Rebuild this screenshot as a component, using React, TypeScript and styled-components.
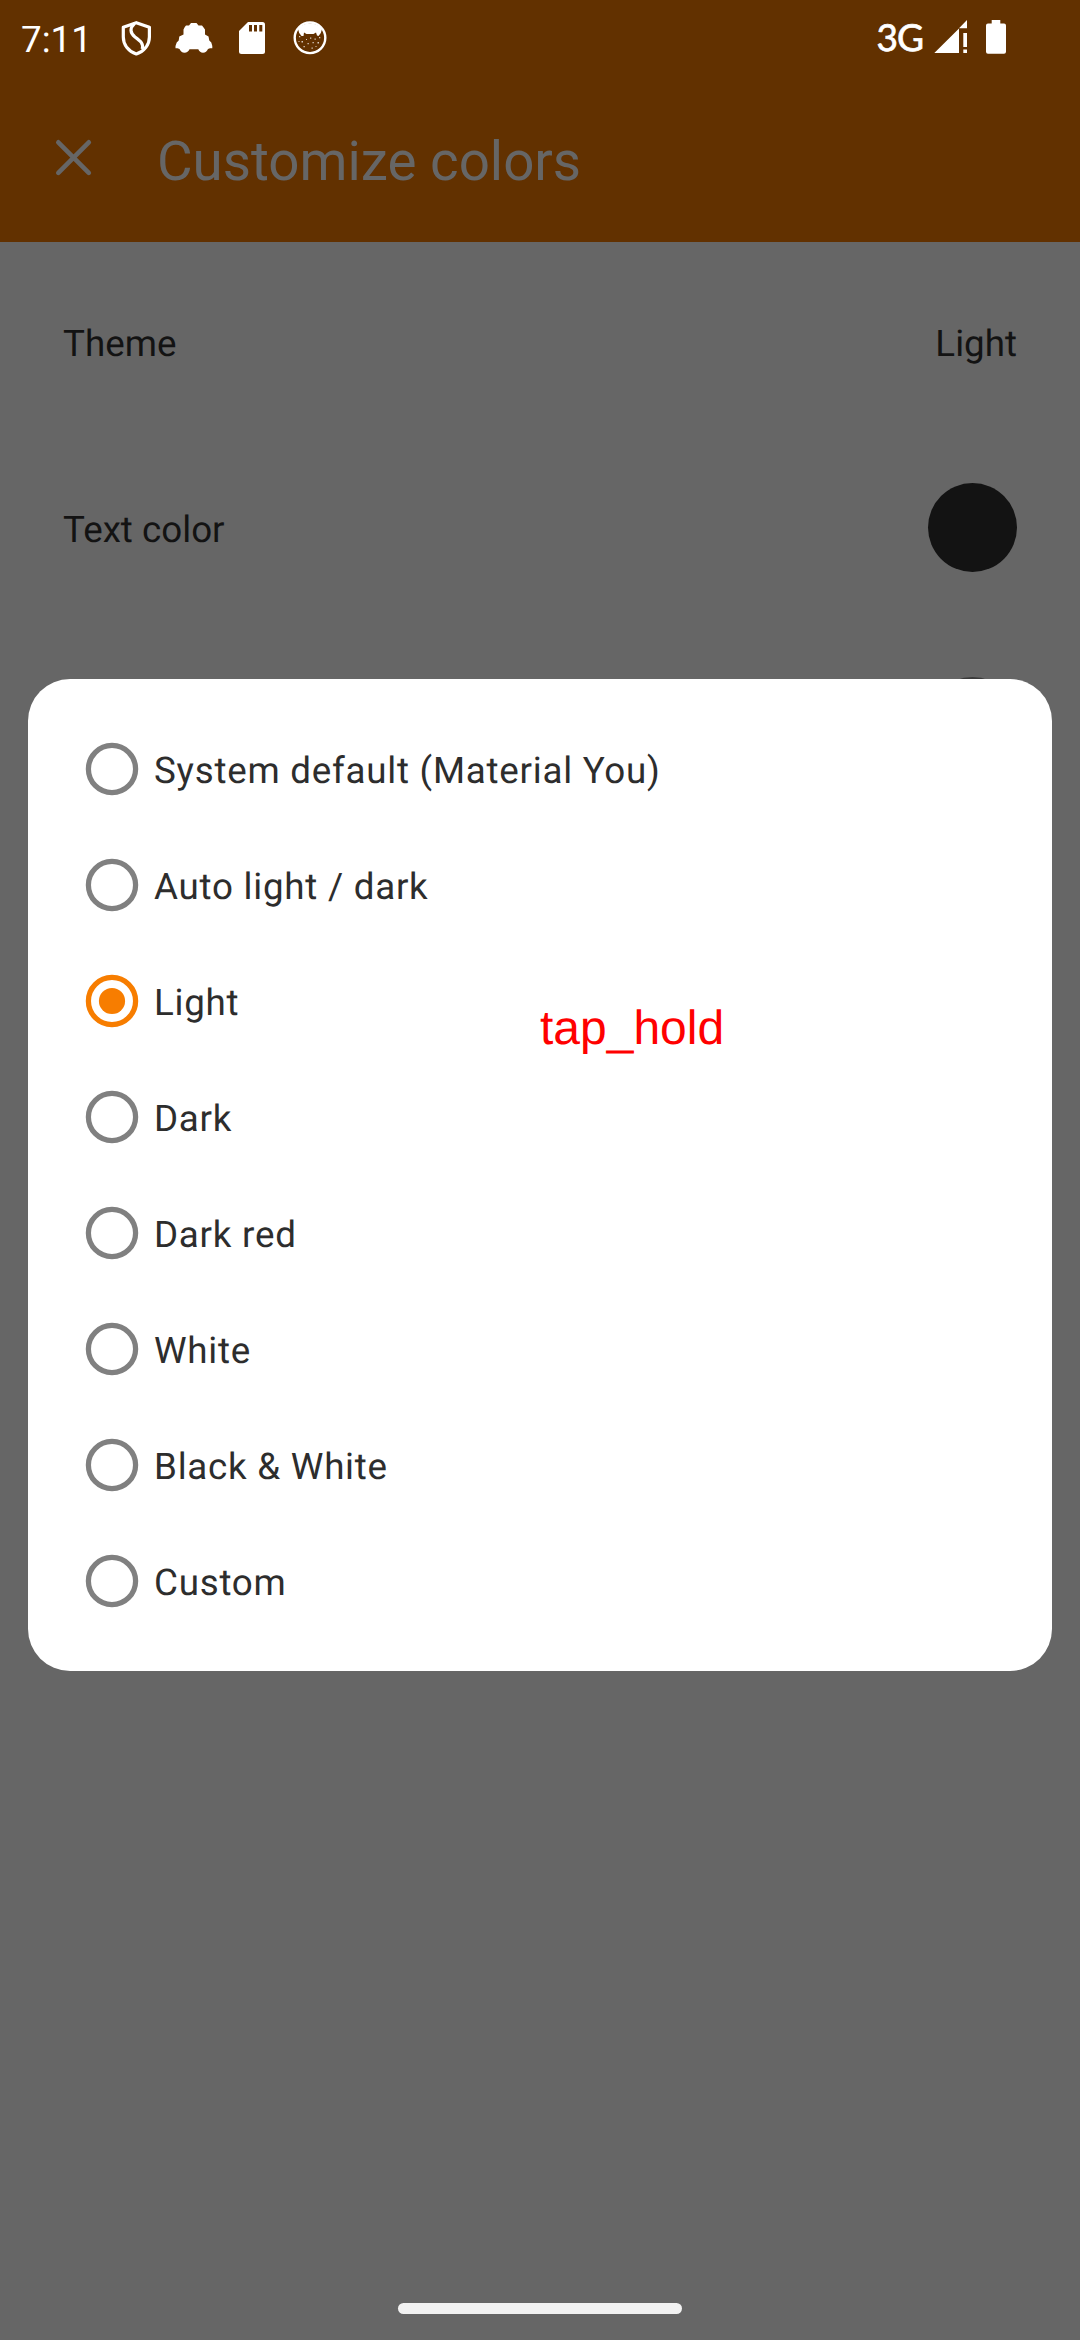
import React from "react";
import styled, { createGlobalStyle } from "styled-components";

const GlobalStyle = createGlobalStyle`
  * { box-sizing: border-box; }
  body {
    margin: 0;
    background: #666666;
    font-family: Roboto, sans-serif;
    text-rendering: geometricPrecision;
  }
`;

const Screen = styled.div`
  position: relative;
  display: flex;
  flex-direction: column;
  width: 1080px;
  height: 2340px;
  overflow: hidden;
  background: #666666;
`;

const Header = styled.header`
  height: 242px;
  background: #623100;
`;

const StatusBar = styled.div`
  display: flex;
  justify-content: space-between;
  height: 76px;
  padding: 0 73px 0 21px;
  color: #ffffff;
`;

const StatusGroup = styled.div`
  display: flex;
  align-items: center;
`;

const Clock = styled.span`
  width: 99px;
  font-size: 36.75px;
  line-height: 44px;
  padding-top: 4px;
`;

const Network = styled.span`
  font-family: Lato, sans-serif;
  font-size: 37px;
  line-height: 44px;
  letter-spacing: -1px;
  padding-bottom: 2px;
  -webkit-text-stroke: 0.7px #ffffff;
`;

const StatusIcon = styled.svg<{ $gap?: number }>`
  display: block;
  flex: none;
  margin-left: ${(p) => p.$gap ?? 0}px;
`;

const TitleBar = styled.div`
  display: flex;
  align-items: center;
  height: 166px;
  padding: 0 52px;
`;

const CloseButton = styled.button`
  display: flex;
  width: 105px;
  height: 44px;
  padding: 0;
  margin-top: -3px;
  border: 0;
  background: none;
`;

const Title = styled.h1`
  margin: 5px 0 0;
  font-size: 54.7px;
  line-height: 64px;
  font-weight: 400;
  color: #666666;
`;

const Settings = styled.main`
  display: flex;
  flex-direction: column;
  padding: 8px 63px 0;
`;

const Setting = styled.div<{ $height: number }>`
  display: flex;
  align-items: center;
  justify-content: space-between;
  height: ${(p) => p.$height}px;
  font-size: 36.75px;
  line-height: 44px;
  color: #131313;
`;

const SettingText = styled.span<{ $drop?: number }>`
  padding-top: ${(p) => p.$drop ?? 0}px;
`;

const Swatch = styled.span<{ $color: string }>`
  width: 89px;
  height: 89px;
  border-radius: 50%;
  background: ${(p) => p.$color};
`;

const Dialog = styled.div`
  position: absolute;
  left: 28px;
  top: 679px;
  display: flex;
  flex-direction: column;
  width: 1024px;
  height: 992px;
  padding: 32px 57px;
  border-radius: 42px;
  background: #ffffff;
`;

const Option = styled.label`
  display: flex;
  align-items: center;
  height: 116px;
  gap: 15px;
  font-size: 36.75px;
  line-height: 44px;
  letter-spacing: 0.75px;
  color: #2d2d2d;
`;

const OptionText = styled.span`
  padding-top: 3px;
`;

const RadioIcon = styled.svg`
  display: block;
  flex: none;
`;

const GestureLabel = styled.div`
  position: absolute;
  left: 540px;
  top: 1001px;
  font-family: "Liberation Sans", sans-serif;
  font-size: 48px;
  line-height: 55px;
  color: #ff0000;
`;

const NavArea = styled.div`
  display: flex;
  justify-content: center;
  margin-top: auto;
  padding-bottom: 26px;
`;

const NavHandle = styled.div`
  width: 284px;
  height: 11px;
  border-radius: 6px;
  background: #f2f2f2;
`;

const ShieldIcon = () => (
  <StatusIcon width="32" height="36" viewBox="120 20 32 36" fill="none" stroke="#fff" strokeWidth="3.2" strokeLinejoin="round">
    <path d="M136.3 22.7 L149.4 27.3 V37 C149.4 45 144 51.2 136.3 54 C128.6 51.2 123.3 45 123.3 37 V27.3 Z" />
    <path d="M134.5 23.5 C129.5 28 130 33 135 37 C141 41.5 143.5 43.5 142.3 49" />
  </StatusIcon>
);

const CarIcon = () => (
  <StatusIcon $gap={22} width="40" height="36" viewBox="174 20 40 36" fill="#fff">
    <path d="M189 25.500 L191 23 H196.500 L198.500 25.500 H202 L203.200 27 L205 29.500 V34.500 L208.500 36.500 L209.300 40.500 L211.300 42.500 L212.300 46 V48.300 H210 L208 49 Q206.500 52.700 203 52.700 Q199.700 52.700 198.300 49.300 H189.500 Q188 52.700 184.500 52.700 Q181 52.700 179.500 49 L177.500 48.300 H175.500 V46 L176.700 42.500 L178.700 40.500 L179.300 36.500 L183.500 34.500 V29.500 L184.800 27 L186 25.500 Z" />
  </StatusIcon>
);

const SdCardIcon = () => (
  <StatusIcon $gap={24} width="28" height="36" viewBox="238 20 28 36">
    <path fill="#fff" d="M248 22 H262.500 Q265 22 265 24.500 V51.500 Q265 54 262.500 54 H241.500 Q239 54 239 51.500 V31 Z" />
    <path fill="#623100" d="M249 25h3v6.500h-3zM254 25h3v6.500h-3zM259.300 25h3v6.500h-3z" />
  </StatusIcon>
);

const CatIcon = () => (
  <StatusIcon $gap={26} width="36" height="36" viewBox="292 20 36 36">
    <circle cx="310" cy="37.800" r="15.300" fill="none" stroke="#fff" strokeWidth="2.400" />
    <path fill="#fff" d="M298 29 Q302 23.500 310 23.500 Q318 23.500 322 29 Q321.500 33 318.500 36 L317 35.500 L316 32.500 L313.500 34 H306.500 L304 32.500 L303.500 36 L301.500 36 Q298.500 33 298 29 Z" />
    <g fill="#fff" opacity="0.75">
      <path d="M299 36h1.300v1.300h-1.300zM301.500 41h1.500v1.500h-1.500zM306 39h1v1h-1zM310 37.500h1.300v1.300h-1.300zM314.500 38.500h1.300v1.300h-1.300zM319 37h1.300v1.300h-1.300zM317.500 42h1.500v1.500h-1.500zM312.500 42h1.300v1.300h-1.300zM307.500 43h1.300v1.300h-1.300zM303.500 46h1.300v1.300h-1.300zM311.500 47.500h1.300v1.300h-1.300zM315.500 46h1v1h-1zM298.500 41h1v1h-1z" />
    </g>
  </StatusIcon>
);

const SignalIcon = () => (
  <StatusIcon $gap={11} width="34" height="36" viewBox="934 20 34 36" fill="#fff">
    <path d="M934.300 53 L959 28.500 V53 Z M959 28.200 L967 20 V28.200 Z M963.300 33 h3.700 v14 h-3.700 Z M963.300 49.500 h3.700 v3.500 h-3.700 Z" />
  </StatusIcon>
);

const BatteryIcon = () => (
  <StatusIcon $gap={17} width="22" height="36" viewBox="985 20 22 36" fill="#fff">
    <path d="M991.700 20 H1000.300 V23.500 H1004 Q1006 23.500 1006 25.500 V51.700 Q1006 53.700 1004 53.700 H988 Q986 53.700 986 51.700 V25.500 Q986 23.500 988 23.500 H991.700 Z" />
  </StatusIcon>
);

const Radio = ({ checked }: { checked: boolean }) => (
  <RadioIcon width="54" height="54" viewBox="-27 -27 54 54">
    <circle r="23.600" fill="none" stroke={checked ? "#f77d00" : "#808080"} strokeWidth="5.250" />
    {checked && <circle r="13.100" fill="#f77d00" />}
  </RadioIcon>
);

const options = [
  "System default (Material You)",
  "Auto light / dark",
  "Light",
  "Dark",
  "Dark red",
  "White",
  "Black & White",
  "Custom",
];

export default function App() {
  return (
    <Screen>
      <GlobalStyle />
      <Header>
        <StatusBar>
          <StatusGroup>
            <Clock>7:11</Clock>
            <ShieldIcon />
            <CarIcon />
            <SdCardIcon />
            <CatIcon />
          </StatusGroup>
          <StatusGroup>
            <Network>3G</Network>
            <SignalIcon />
            <BatteryIcon />
          </StatusGroup>
        </StatusBar>
        <TitleBar>
          <CloseButton aria-label="Close">
            <svg width="44" height="44" viewBox="52 136 44 44" fill="none" stroke="#666666" strokeWidth="4.600" strokeLinecap="round">
              <path d="M58.300 142.300 L88.800 172.800 M88.800 142.300 L58.300 172.800" />
            </svg>
          </CloseButton>
          <Title>Customize colors</Title>
        </TitleBar>
      </Header>
      <Settings>
        <Setting $height={186}>
          <SettingText $drop={1}>Theme</SettingText>
          <SettingText $drop={1}>Light</SettingText>
        </Setting>
        <Setting $height={183}>
          <SettingText $drop={4}>Text color</SettingText>
          <Swatch $color="#131313" />
        </Setting>
        <Setting $height={204}>
          <span />
          <Swatch $color="#3b3b3b" />
        </Setting>
      </Settings>
      <NavArea>
        <NavHandle />
      </NavArea>
      <Dialog role="dialog">
        {options.map((name) => (
          <Option key={name}>
            <Radio checked={name === "Light"} />
            <OptionText>{name}</OptionText>
          </Option>
        ))}
      </Dialog>
      <GestureLabel>tap_hold</GestureLabel>
    </Screen>
  );
}
